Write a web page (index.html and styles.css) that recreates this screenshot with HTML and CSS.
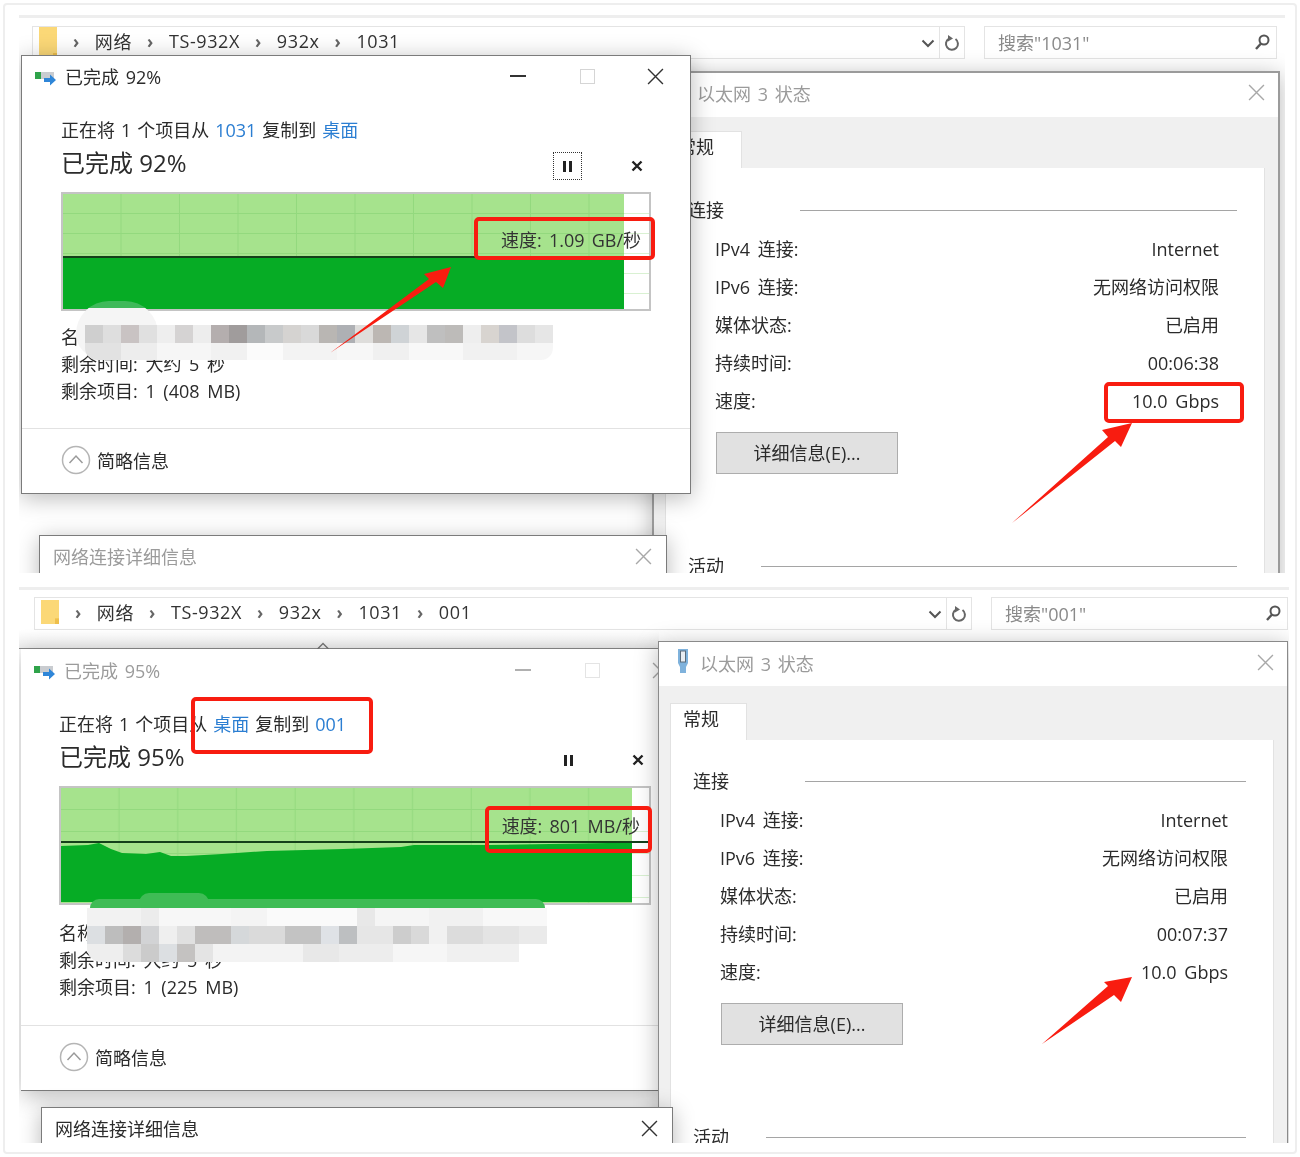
FILE: index.html
```html
<!DOCTYPE html>
<html>
<head>
    <title>Copy speed</title>
    <link rel="stylesheet" href="styles.css">
</head>
<body>
    <div class="frame">

        <!-- first screenshot -->
        <div class="shot shot-a">
            <div class="toolbar">
                <div class="addr">
                    <svg class="folder" viewBox="0 0 20 34" preserveAspectRatio="none"><path d="M1 0H19V34H1Z" fill="#fbd877"/><path d="M15 26H19V34H15Z" fill="#eebf4c"/></svg>
                    <span class="sep">›</span><span>网络</span><span class="sep">›</span><span>TS-932X</span><span class="sep">›</span><span>932x</span><span class="sep">›</span><span>1031</span>
                    <svg class="drop" viewBox="0 0 14 9"><path d="M1.5 1.5L7 7L12.5 1.5" fill="none" stroke="#555" stroke-width="2"/></svg>
                </div>
                <div class="refresh"><svg viewBox="0 0 16 18"><path d="M11.5 5A6 6 0 1 1 5 4.6" fill="none" stroke="#666" stroke-width="2"/><path d="M4 1V7.5L9 4.5Z" fill="#666"/></svg></div>
                <div class="search">
                    <span>搜索"1031"</span>
                    <svg viewBox="0 0 16 16"><circle cx="10" cy="6" r="4.5" fill="none" stroke="#555" stroke-width="2"/><path d="M7 9.5L2 15" stroke="#555" stroke-width="2.4"/></svg>
                </div>
            </div>

            <div class="win net-win">
                <div class="net-title"><span class="faded">以太网 3 状态</span><svg class="x faded-x" viewBox="0 0 16 16"><path d="M1 1L15 15M15 1L1 15"/></svg></div>
                <div class="net-body">
                    <div class="tab">常规</div>
                    <div class="panel">
                        <div class="group"><span>连接</span><i></i></div>
                        <div class="row"><span>IPv4 连接:</span><span>Internet</span></div>
                        <div class="row"><span>IPv6 连接:</span><span>无网络访问权限</span></div>
                        <div class="row"><span>媒体状态:</span><span>已启用</span></div>
                        <div class="row"><span>持续时间:</span><span>00:06:38</span></div>
                        <div class="row"><span>速度:</span><span>10.0 Gbps</span></div>
                        <div class="btn">详细信息(E)...</div>
                        <div class="group group-next"><span>活动</span><i></i></div>
                    </div>
                </div>
            </div>

            <div class="win detail-win">
                <span class="faded">网络连接详细信息</span>
                <svg class="x faded-x" viewBox="0 0 16 16"><path d="M1 1L15 15M15 1L1 15"/></svg>
            </div>

            <div class="win copy-win">
                <div class="copy-title">
                    <svg class="copy-icon" viewBox="0 0 22 18"><rect x="0" y="3" width="6" height="7" fill="#2fa34a"/><rect x="6" y="3" width="13" height="7" fill="#c9ccd0"/><path d="M9 9H15V5.5L21 11L15 16.5V13H9Z" fill="#2f86d8"/></svg>
                    <span class="copy-name">已完成 92%</span>
                    <span class="ctl"><i class="min"></i></span>
                    <span class="ctl"><i class="max"></i></span>
                    <span class="ctl"><svg class="x" viewBox="0 0 16 16"><path d="M1 1L15 15M15 1L1 15"/></svg></span>
                </div>
                <div class="copy-body">
                    <div class="msg">正在将 1 个项目从 <a>1031</a> 复制到 <a>桌面</a></div>
                    <div class="big-row">
                        <span class="big">已完成 92%</span>
                        <span class="pause focus"><i></i><i></i></span>
                        <svg class="stop" viewBox="0 0 12 12"><path d="M1.5 1.5L10.5 10.5M10.5 1.5L1.5 10.5"/></svg>
                    </div>
                    <div class="graph">
                        <svg class="chart" viewBox="0 0 586 115">
                            <rect x="561" y="0" width="25" height="115" fill="url(#rest-a)"/>
                            <rect x="0" y="0" width="561" height="115" fill="url(#grid-a)"/>
                            <path d="M0 62H38V65H0Z" fill="#3d9a3f"/>
                            <rect x="0" y="64" width="561" height="51" fill="#06ac25"/>
                            <rect x="0" y="62" width="561" height="2" fill="#14401a"/>
                            <defs>
                                <pattern id="grid-a" width="58.5" height="20" patternUnits="userSpaceOnUse">
                                    <rect width="58.5" height="20" fill="#a6e38d"/>
                                    <path d="M58 0V20M0 19.5H58.5" stroke="#93d97e" fill="none"/>
                                </pattern>
                                <pattern id="rest-a" width="25" height="20" patternUnits="userSpaceOnUse">
                                    <path d="M0 19.5H25" stroke="#d9f1d2" fill="none"/>
                                </pattern>
                            </defs>
                        </svg>
                        <span class="speed">速度: 1.09 GB/秒</span>
                    </div>
                    <div class="info">名称:</div>
                    <div class="info">剩余时间: 大约 5 秒</div>
                    <div class="info">剩余项目: 1 (408 MB)</div>
                </div>
                <div class="copy-foot">
                    <svg class="fold" viewBox="0 0 30 30"><circle cx="15" cy="15" r="13.5" fill="#fff" stroke="#b5b5b5" stroke-width="1.5"/><path d="M8.5 18L15 11L21.5 18" fill="none" stroke="#9a9a9a" stroke-width="1.5"/></svg>
                    <span>简略信息</span>
                </div>
            </div>

            <div class="blur-a-dot"></div>
            <div class="mosaic mosaic-a">
                <div class="m-row a1"></div>
                <div class="m-row a2"></div>
            </div>

            <svg class="marks" viewBox="19 15 1266 558">
                <rect x="476" y="219" width="177" height="39" rx="3"/>
                <rect x="1106" y="384" width="136" height="37" rx="3"/>
                <polygon points="330,353 429,279 424,274 451,267 443,288 436,282"/>
                <polygon points="1012,523 1108,437 1102,430 1132,423 1121,447 1115,441"/>
            </svg>
        </div>

        <!-- second screenshot -->
        <div class="shot shot-b">
            <div class="toolbar">
                <div class="addr">
                    <svg class="folder" viewBox="0 0 20 34" preserveAspectRatio="none"><path d="M1 0H19V34H1Z" fill="#fbd877"/><path d="M15 26H19V34H15Z" fill="#eebf4c"/></svg>
                    <span class="sep">›</span><span>网络</span><span class="sep">›</span><span>TS-932X</span><span class="sep">›</span><span>932x</span><span class="sep">›</span><span>1031</span><span class="sep">›</span><span>001</span>
                    <svg class="drop" viewBox="0 0 14 9"><path d="M1.5 1.5L7 7L12.5 1.5" fill="none" stroke="#555" stroke-width="2"/></svg>
                </div>
                <div class="refresh"><svg viewBox="0 0 16 18"><path d="M11.5 5A6 6 0 1 1 5 4.6" fill="none" stroke="#666" stroke-width="2"/><path d="M4 1V7.5L9 4.5Z" fill="#666"/></svg></div>
                <div class="search">
                    <span>搜索"001"</span>
                    <svg viewBox="0 0 16 16"><circle cx="10" cy="6" r="4.5" fill="none" stroke="#555" stroke-width="2"/><path d="M7 9.5L2 15" stroke="#555" stroke-width="2.4"/></svg>
                </div>
            </div>
            <div class="ribbon"><svg viewBox="0 0 14 8"><path d="M1.5 7L7 1.5L12.5 7" fill="none" stroke="#777" stroke-width="1.4"/></svg></div>

            <div class="win copy-win">
                <div class="copy-title">
                    <svg class="copy-icon" viewBox="0 0 22 18"><rect x="0" y="3" width="6" height="7" fill="#2fa34a"/><rect x="6" y="3" width="13" height="7" fill="#c9ccd0"/><path d="M9 9H15V5.5L21 11L15 16.5V13H9Z" fill="#2f86d8"/></svg>
                    <span class="copy-name faded">已完成 95%</span>
                    <span class="ctl"><i class="min min-off"></i></span>
                    <span class="ctl"><i class="max max-off"></i></span>
                    <span class="ctl"><svg class="x faded-x" viewBox="0 0 16 16"><path d="M1 1L15 15M15 1L1 15"/></svg></span>
                </div>
                <div class="copy-body">
                    <div class="msg">正在将 1 个项目从 <a>桌面</a> 复制到 <a>001</a></div>
                    <div class="big-row">
                        <span class="big">已完成 95%</span>
                        <span class="pause"><i></i><i></i></span>
                        <svg class="stop" viewBox="0 0 12 12"><path d="M1.5 1.5L10.5 10.5M10.5 1.5L1.5 10.5"/></svg>
                    </div>
                    <div class="graph">
                        <svg class="chart" viewBox="0 0 588 115">
                            <rect x="571" y="0" width="17" height="115" fill="url(#rest-b)"/>
                            <rect x="0" y="0" width="571" height="115" fill="url(#grid-b)"/>
                            <polygon fill="#06ac25" points="0,58 27,57 38,55 50,61 61,65 85,66 99,64 110,68 125,68 161,66 206,63 282,61 340,59 353,57 429,57 547,55 571,54 571,114 0,114"/>
                            <rect x="0" y="53" width="587" height="2" fill="#14401a"/>
                            <defs>
                                <pattern id="grid-b" width="58.7" height="22" patternUnits="userSpaceOnUse">
                                    <rect width="58.7" height="22" fill="#a6e38d"/>
                                    <path d="M58 0V22M0 21.500H58.7" stroke="#93d97e" fill="none"/>
                                </pattern>
                                <pattern id="rest-b" width="17" height="22" patternUnits="userSpaceOnUse">
                                    <path d="M0 21.500H17" stroke="#d9f1d2" fill="none"/>
                                </pattern>
                            </defs>
                        </svg>
                        <span class="speed">速度: 801 MB/秒</span>
                    </div>
                    <div class="info">名称:</div>
                    <div class="info">剩余时间: 大约 5 秒</div>
                    <div class="info">剩余项目: 1 (225 MB)</div>
                </div>
                <div class="copy-foot">
                    <svg class="fold" viewBox="0 0 30 30"><circle cx="15" cy="15" r="13.5" fill="#fff" stroke="#b5b5b5" stroke-width="1.5"/><path d="M8.5 18L15 11L21.5 18" fill="none" stroke="#9a9a9a" stroke-width="1.5"/></svg>
                    <span>简略信息</span>
                </div>
            </div>

            <div class="win net-win">
                <div class="net-title">
                    <svg class="plug" viewBox="0 0 16 26"><path d="M3 1H13V15L11 19V25H5V19L3 15Z" fill="#7fb2dc"/><rect x="5.500" y="3" width="5" height="11" fill="#e8edf2" stroke="#5a6b7a"/></svg>
                    <span class="faded">以太网 3 状态</span>
                    <svg class="x faded-x" viewBox="0 0 16 16"><path d="M1 1L15 15M15 1L1 15"/></svg>
                </div>
                <div class="net-body">
                    <div class="tab">常规</div>
                    <div class="panel">
                        <div class="group"><span>连接</span><i></i></div>
                        <div class="row"><span>IPv4 连接:</span><span>Internet</span></div>
                        <div class="row"><span>IPv6 连接:</span><span>无网络访问权限</span></div>
                        <div class="row"><span>媒体状态:</span><span>已启用</span></div>
                        <div class="row"><span>持续时间:</span><span>00:07:37</span></div>
                        <div class="row"><span>速度:</span><span>10.0 Gbps</span></div>
                        <div class="btn">详细信息(E)...</div>
                        <div class="group group-next"><span>活动</span><i></i></div>
                    </div>
                </div>
            </div>

            <div class="win detail-win">
                <span>网络连接详细信息</span>
                <svg class="x" viewBox="0 0 16 16"><path d="M1 1L15 15M15 1L1 15"/></svg>
            </div>

            <div class="blur-b-top"></div>
            <div class="blur-b-dot"></div>
            <div class="mosaic mosaic-b">
                <div class="m-row b1"></div>
                <div class="m-row b2"></div>
                <div class="m-row b3"></div>
            </div>

            <svg class="marks" viewBox="19 587 1270 556">
                <rect x="193" y="699" width="178" height="53" rx="3"/>
                <rect x="487" y="808" width="163" height="43" rx="3"/>
                <polygon points="1042,1044 1108,986 1104,982 1132,977 1121,1002 1114,995"/>
            </svg>
        </div>
    </div>
</body>
</html>
```

FILE: styles.css
```css
* {
    box-sizing: border-box;
}

body {
    margin: 0;
    background: #fff;
    font-family: "Open Sans", "Noto Sans CJK SC", sans-serif;
    font-size: 18px;
    color: #2b2b2b;
    word-spacing: 2px;
}

.frame {
    width: 1294px;
    height: 1151px;
    margin: 3px;
    padding: 10px 0 0 14px;
    border: 2px solid #eee;
    border-radius: 4px;
}

.shot {
    position: relative;
    overflow: hidden;
    background: #fff;
    border-top: 3px solid #eee;
    filter: blur(.35px);
}

.shot-a {
    width: 1266px;
    height: 558px;
}

.shot-b {
    width: 1270px;
    height: 556px;
    margin-top: 14px;
}

/* explorer bar */
.toolbar {
    display: flex;
    height: 33px;
    margin-top: 8px;
}

.shot-a .toolbar {
    margin-left: 13px;
}

.shot-b .toolbar {
    margin-top: 7px;
    margin-left: 15px;
}

.addr, .refresh, .search {
    display: flex;
    align-items: center;
    height: 33px;
    border: 1px solid #e4e4e4;
}

.addr {
    flex: none;
    gap: 15px;
    padding: 0 4px 3px 5px;
    color: #333;
    letter-spacing: .6px;
    word-spacing: 0;
}

.shot-a .addr {
    width: 908px;
}

.shot-b .addr {
    width: 913px;
}

.folder {
    width: 20px;
    height: 24px;
}

.shot-a .folder {
    height: 34px;
    margin-top: 6px;
}

.sep {
    color: #666;
    font-size: 17px;
    font-weight: 700;
}

.drop {
    width: 14px;
    height: 9px;
    margin-top: 4px;
    margin-left: auto;
}

.refresh {
    flex: none;
    justify-content: center;
    width: 25px;
    border-left: none;
}

.refresh svg {
    width: 16px;
    height: 18px;
}

.search {
    flex: none;
    justify-content: space-between;
    margin-left: 19px;
    padding: 0 6px 2px 13px;
    color: #8a8a8a;
}

.shot-a .search {
    width: 293px;
}

.shot-b .search {
    width: 297px;
}

.search svg {
    width: 16px;
    height: 16px;
}

.ribbon {
    display: flex;
    justify-content: center;
    width: 640px;
    height: 19px;
    padding: 12px 32px 0 0;
    background: linear-gradient(#fff, #f1f1f1);
    border-bottom: 1px solid #8d8d8d;
}

.ribbon svg {
    width: 14px;
    height: 8px;
}

/* windows sit on a free canvas */
.win {
    position: absolute;
    background: #fff;
    border: 1px solid #7b7b7b;
    box-shadow: 0 4px 22px rgba(0, 0, 0, .28);
}

.x {
    width: 17px;
    height: 17px;
    fill: none;
    stroke: #333;
    stroke-width: 1.3;
}

.faded {
    color: #9b9b9b;
}

.faded-x {
    stroke: #a8a8a8;
}

/* copy progress window */
.copy-win {
    display: flex;
    flex-direction: column;
}

.shot-a .copy-win {
    top: 37px;
    left: 2px;
    width: 670px;
    height: 439px;
}

.shot-b .copy-win {
    top: 59px;
    left: 2px;
    width: 640px;
    height: 442px;
    border: none;
    border-bottom: 1px solid #7b7b7b;
}

.copy-title {
    display: flex;
    flex: none;
    align-items: center;
    height: 44px;
    padding: 0 1px 4px 13px;
}

.shot-b .copy-title {
    padding-bottom: 2px;
}

.copy-icon {
    width: 22px;
    height: 18px;
    margin-top: 3px;
}

.copy-name {
    flex: 1;
    margin-left: 8px;
}

.ctl {
    display: flex;
    align-items: center;
    justify-content: center;
    width: 67px;
}

.ctl:nth-last-child(3) {
    margin-right: 3px;
}

.ctl:nth-last-child(2) {
    margin-right: 1px;
}

.shot-b .ctl:last-child {
    margin-right: -34px;
}

.min {
    width: 16px;
    height: 2px;
    background: #333;
}

.max {
    width: 15px;
    height: 15px;
    border: 1px solid #d5d5d5;
}

.min-off {
    background: #b0b0b0;
}

.max-off {
    border-color: #e4e4e4;
}

.copy-body {
    flex: 1;
    padding: 19px 40px 0 39px;
}

.shot-b .copy-body {
    padding: 20px 10px 0 38px;
}

.msg {
    height: 24px;
    line-height: 22px;
    white-space: nowrap;
    word-spacing: 1.3px;
}

.msg a {
    color: #2b7ed2;
}

.big-row {
    display: flex;
    align-items: center;
    height: 36px;
    margin-top: 3px;
}

.big {
    flex: 1;
    padding-bottom: 5px;
    font-size: 24px;
    word-spacing: 0;
}

.pause {
    display: flex;
    justify-content: center;
    align-items: center;
    gap: 3px;
    width: 29px;
    height: 28px;
    margin-top: 4px;
    margin-right: 49px;
}

.focus {
    border: 1px dotted #333;
}

.pause i {
    width: 3px;
    height: 11px;
    background: #222;
}

.stop {
    width: 12px;
    height: 12px;
    margin-top: 4px;
    margin-right: 7px;
    fill: none;
    stroke: #222;
    stroke-width: 2.4;
}

.graph {
    position: relative;
    width: 590px;
    height: 119px;
    margin-top: 10px;
    border: 2px solid #c4c4c4;
    background: #fff;
}

.shot-b .graph {
    width: 592px;
    margin-top: 10px;
}

.chart {
    display: block;
    width: 100%;
    height: 100%;
}

.speed {
    position: absolute;
    top: 32px;
    right: 8px;
    color: #333;
    word-spacing: 2.5px;
    white-space: nowrap;
}

.shot-b .speed {
    top: 24px;
    right: 9px;
}

.info {
    height: 27px;
    line-height: 25px;
    white-space: nowrap;
    word-spacing: 3px;
}

.graph + .info {
    margin-top: 14px;
}

.shot-b .graph + .info {
    margin-top: 16px;
}

.copy-foot {
    display: flex;
    flex: none;
    align-items: center;
    gap: 6px;
    height: 65px;
    padding: 0 0 3px 39px;
    border-top: 1px solid #e2e2e2;
}

.shot-b .copy-foot {
    padding-left: 38px;
}

.fold {
    width: 30px;
    height: 30px;
}

/* network status window */
.net-win {
    display: flex;
    flex-direction: column;
    height: 640px;
    border: 2px solid #9b9b9b;
    border-bottom: none;
}

.shot-a .net-win {
    top: 53px;
    left: 633px;
    width: 628px;
}

.shot-b .net-win {
    top: 51px;
    left: 639px;
    width: 630px;
    border-width: 1px;
    border-color: #8a8a8a;
}

.net-title {
    display: flex;
    flex: none;
    align-items: center;
    gap: 9px;
    height: 44px;
    padding: 0 13px 3px 16px;
}

.shot-a .net-title {
    padding-left: 43px;
    padding-bottom: 5px;
}

.net-title .x {
    margin-left: auto;
}

.plug {
    width: 16px;
    height: 26px;
    margin-top: -4px;
}

.net-body {
    flex: 1;
    padding: 14px 13px 0 11px;
    background: #f0f0f0;
}

.shot-b .net-body {
    padding-top: 17px;
}

.tab {
    width: 77px;
    height: 37px;
    padding: 1px 0 0 12px;
    background: #fff;
    border: 1px solid #e2e2e2;
    border-bottom: none;
}

.panel {
    height: 540px;
    padding: 30px 27px 0 22px;
    background: #fff;
    border: 1px solid #e2e2e2;
    border-top: none;
}

.shot-b .panel {
    padding-top: 29px;
}

.group {
    display: flex;
    align-items: center;
    height: 24px;
}

.group span {
    flex: none;
    width: 112px;
    line-height: 22px;
}

.group i {
    flex: 1;
    height: 1px;
    background: #a5a5a5;
}

.group-next {
    margin-top: 80px;
}

.group-next span {
    width: 73px;
}

.row {
    display: flex;
    justify-content: space-between;
    height: 38px;
    padding: 0 18px 0 27px;
    line-height: 40px;
    word-spacing: 3px;
}

.row:nth-child(2) {
    margin-top: 7px;
}

.btn {
    display: flex;
    align-items: center;
    justify-content: center;
    width: 182px;
    height: 42px;
    margin: 13px 0 0 28px;
    padding-bottom: 2px;
    background: #e1e1e1;
    border: 1px solid #adadad;
}

/* details window, cut off by the crop */
.detail-win {
    display: flex;
    align-items: center;
    justify-content: space-between;
    height: 60px;
    padding: 0 14px 18px 13px;
}

.shot-a .detail-win {
    top: 517px;
    left: 20px;
    width: 628px;
}

.shot-b .detail-win {
    top: 517px;
    left: 22px;
    width: 632px;
}

/* pixelated file name */
.blur-a-dot {
    position: absolute;
    top: 283px;
    left: 57px;
    width: 82px;
    height: 57px;
    border-radius: 41px 41px 30px 30px;
    background: linear-gradient(#3fb95a 7px, #f5f5f5 7px);
}

.mosaic {
    position: absolute;
}

.mosaic-a {
    top: 307px;
    left: 66px;
}

.m-row {
    height: 18px;
    width: 468px;
}

.a1 {
    background: linear-gradient(90deg,
        #cfcfcf 0 18px, #dedede 18px 36px, #c9c3c3 36px 54px, #e0e0e0 54px 72px,
        #eee 72px 90px, #d5d3d3 90px 108px, #ededed 108px 126px, #b4aeae 126px 144px,
        #a09c9c 144px 162px, #b4b7b9 162px 180px, #c8cacb 180px 198px, #d5d3d1 198px 216px,
        #d9d9d9 216px 234px, #b9b6b3 234px 252px, #aeb0b4 252px 270px, #dedddb 270px 288px,
        #bcb7b3 288px 306px, #cfd3d6 306px 324px, #e6e6e6 324px 342px, #bfbfbf 342px 360px,
        #bdbbb9 360px 378px, #eee 378px 396px, #d8d4d0 396px 414px, #c3c4c9 414px 432px,
        #ddd 432px 450px, #e6e6e6 450px 468px);
}

.a2 {
    height: 17px;
    border-radius: 0 0 12px 12px;
    background: linear-gradient(90deg,
        #e2e2e2 0 36px, #ededed 36px 72px, #f6f6f6 72px 126px, #f1f1f1 126px 162px,
        #fbfbfb 162px 198px, #f3f3f3 198px 252px, #f7f7f7 252px 288px, #f0f0f0 288px 324px,
        #f8f8f8 324px 378px, #f1f1f1 378px 432px, #f6f6f6 432px 468px);
}

.blur-b-top {
    position: absolute;
    top: 309px;
    left: 71px;
    width: 455px;
    height: 9px;
    border-radius: 10px 10px 0 0;
    background: #3fbc55;
}

.blur-b-dot {
    position: absolute;
    top: 303px;
    left: 120px;
    width: 70px;
    height: 10px;
    border-radius: 35px 35px 0 0;
    background: #3fbc55;
}

.mosaic-b {
    top: 318px;
    left: 68px;
}

.mosaic-b .m-row {
    width: 460px;
}

.b1 {
    background: linear-gradient(90deg,
        #f2f2f2 0 54px, #ececec 54px 72px, #f7f7f7 72px 144px, #f4f4f4 144px 180px,
        #fafafa 180px 270px, #e8e8e8 270px 288px, #f5f5f5 288px 342px, #f1f1f1 342px 396px,
        #f8f8f8 396px 460px);
}

.b2 {
    background: linear-gradient(90deg,
        #dcdfe2 0 18px, #bdbdbd 18px 36px, #b3afae 36px 54px, #d2d3d5 54px 72px,
        #efefef 72px 90px, #e0e0e0 90px 108px, #bfbdbc 108px 144px, #d5d8da 144px 162px,
        #dadada 162px 198px, #c3c3c3 198px 234px, #dfe2e6 234px 252px, #bdbfc1 252px 270px,
        #e6e6e6 270px 306px, #cdcdcd 306px 324px, #d9d9d9 324px 342px, #f1f1f1 342px 360px,
        #dcdcdc 360px 396px, #e4e4e4 396px 432px, #eaeaea 432px 460px);
}

.b3 {
    border-radius: 0 0 14px 14px;
    background: linear-gradient(90deg,
        #eee 0 36px, #dcdcdc 36px 54px, #cbcbcb 54px 72px, #dcdfe2 72px 90px,
        #c4c2c1 90px 108px, #e4e4e4 108px 126px, #f3f3f3 126px 216px, #e8e8e8 216px 252px,
        #ededed 252px 306px, #f6f6f6 306px 360px, #f0f0f0 360px 432px, transparent 432px);
}

/* red notes drawn on top of the pictures */
.marks {
    position: absolute;
    top: -3px;
    left: 0;
    width: 100%;
    height: calc(100% + 3px);
}

.marks rect {
    fill: none;
    stroke: #f81c10;
    stroke-width: 4;
}

.marks polygon {
    fill: #f81c10;
}
```
